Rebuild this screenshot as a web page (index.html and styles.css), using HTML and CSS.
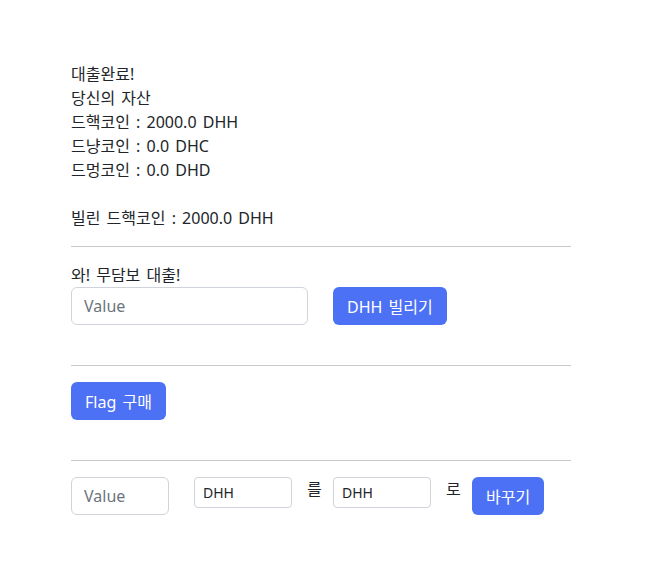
FILE: index.html
```html
<!DOCTYPE html>
<html lang="ko">

<head>
    <meta charset="UTF-8">
    <title>DHH Bank</title>
    <link rel="stylesheet" href="styles.css">
</head>

<body>

    <div class="wrap">
        <div class="status">
            <p>대출완료!</p>
            <p>당신의 자산</p>
            <p>드핵코인 : 2000.0 DHH</p>
            <p>드냥코인 : 0.0 DHC</p>
            <p>드멍코인 : 0.0 DHD</p>
            <p class="blank"></p>
            <p>빌린 드핵코인 : 2000.0 DHH</p>
        </div>

        <hr>

        <div class="section">
            <p>와! 무담보 대출!</p>
            <div class="row">
                <input class="field field-wide" type="number" placeholder="Value">
                <button class="btn">DHH 빌리기</button>
            </div>
        </div>

        <hr>

        <div class="section">
            <button class="btn">Flag 구매</button>
        </div>

        <hr>

        <div class="row swap">
            <input class="field field-small" type="number" placeholder="Value">
            <select class="pick">
                <option>DHH</option>
                <option>DHC</option>
                <option>DHD</option>
            </select>
            <span class="word">를</span>
            <select class="pick">
                <option>DHH</option>
                <option>DHC</option>
                <option>DHD</option>
            </select>
            <span class="word">로</span>
            <button class="btn">바꾸기</button>
        </div>
    </div>

</body>

</html>
```

FILE: styles.css
```css
body {
    margin: 0;
    font-family: 'Noto Sans', 'Noto Sans CJK KR', sans-serif;
    font-size: 16px;
    line-height: 24px;
    word-spacing: 2px;
    color: #212529;
    background: #fff;
}

.wrap {
    width: 500px;
    padding: 62px 0 40px 71px;
}

p {
    margin: 0;
}

.blank {
    height: 24px;
}

hr {
    border: 0;
    border-top: 1px solid #c9c9c9;
    margin: 16px 0;
}

.section {
    margin-bottom: 40px;
}

.row {
    display: flex;
    align-items: center;
}

.section .row {
    gap: 25px;
}

.field {
    box-sizing: border-box;
    height: 38px;
    padding: 6px 12px;
    font-family: inherit;
    font-size: 16px;
    color: #212529;
    border: 1px solid #ced4da;
    border-radius: 6px;
    background: #fff;
}

.field::placeholder {
    color: #6c757d;
}

.field-wide {
    width: 237px;
}

.field-small {
    width: 98px;
}

.btn {
    height: 38px;
    padding: 0 14px;
    font-family: inherit;
    font-size: 16px;
    word-spacing: 2px;
    color: #fff;
    background: #4c71f5;
    border: 0;
    border-radius: 6px;
    cursor: pointer;
}

.swap {
    align-items: flex-start;
}

.swap .field-small {
    margin-right: 25px;
}

.pick {
    box-sizing: border-box;
    width: 98px;
    height: 31px;
    padding: 0 8px;
    font-family: inherit;
    font-size: 14px;
    color: #212529;
    border: 1px solid #ced4da;
    border-radius: 4px;
    background: #fff;
    appearance: none;
    -webkit-appearance: none;
}

.word {
    width: 12px;
    margin: 0 14px 0 15px;
    line-height: 24px;
}
```
